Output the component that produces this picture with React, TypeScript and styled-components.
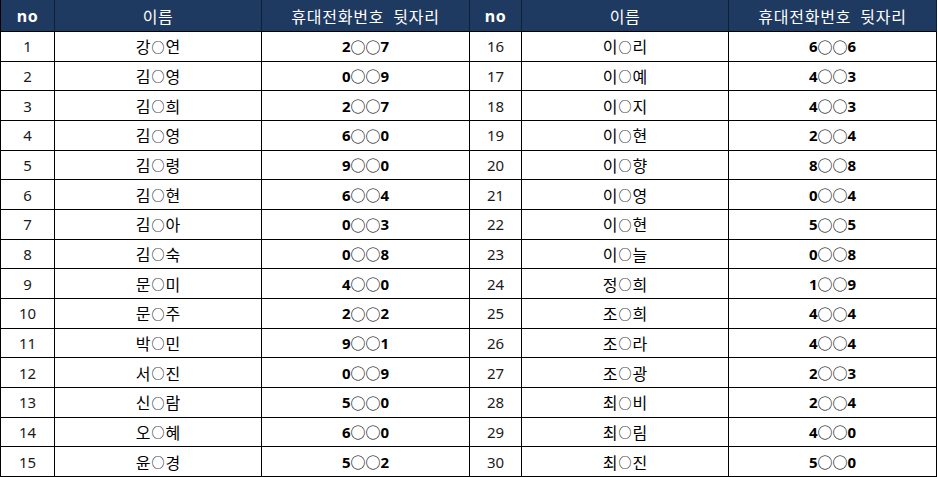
import styled, { createGlobalStyle } from "styled-components";

import type { FC } from "react";

type Entry = {
  no: number;
  name: string;
  phone: string;
};

const entries: Entry[] = [
  { no: 1, name: "강○연", phone: "2○○7" },
  { no: 2, name: "김○영", phone: "0○○9" },
  { no: 3, name: "김○희", phone: "2○○7" },
  { no: 4, name: "김○영", phone: "6○○0" },
  { no: 5, name: "김○령", phone: "9○○0" },
  { no: 6, name: "김○현", phone: "6○○4" },
  { no: 7, name: "김○아", phone: "0○○3" },
  { no: 8, name: "김○숙", phone: "0○○8" },
  { no: 9, name: "문○미", phone: "4○○0" },
  { no: 10, name: "문○주", phone: "2○○2" },
  { no: 11, name: "박○민", phone: "9○○1" },
  { no: 12, name: "서○진", phone: "0○○9" },
  { no: 13, name: "신○람", phone: "5○○0" },
  { no: 14, name: "오○혜", phone: "6○○0" },
  { no: 15, name: "윤○경", phone: "5○○2" },
  { no: 16, name: "이○리", phone: "6○○6" },
  { no: 17, name: "이○예", phone: "4○○3" },
  { no: 18, name: "이○지", phone: "4○○3" },
  { no: 19, name: "이○현", phone: "2○○4" },
  { no: 20, name: "이○향", phone: "8○○8" },
  { no: 21, name: "이○영", phone: "0○○4" },
  { no: 22, name: "이○현", phone: "5○○5" },
  { no: 23, name: "이○늘", phone: "0○○8" },
  { no: 24, name: "정○희", phone: "1○○9" },
  { no: 25, name: "조○희", phone: "4○○4" },
  { no: 26, name: "조○라", phone: "4○○4" },
  { no: 27, name: "조○광", phone: "2○○3" },
  { no: 28, name: "최○비", phone: "2○○4" },
  { no: 29, name: "최○림", phone: "4○○0" },
  { no: 30, name: "최○진", phone: "5○○0" },
];

const GlobalStyle = createGlobalStyle`
  html, body {
    margin: 0;
    padding: 0;
    background: #ffffff;
  }
  body {
    font-family: "Noto Sans", "Noto Sans CJK KR", sans-serif;
  }
`;

// masked characters are drawn as a thin circle, smaller in names than in numbers
const Masked: FC<{ text: string; small?: boolean }> = ({ text, small }) => (
  <>
    {text.split(/(○)/).map((part, i) =>
      part === "○" ? (
        <Mask key={i} small={small}>
          ○
        </Mask>
      ) : (
        <span key={i}>{part}</span>
      )
    )}
  </>
);

const App: FC = () => {
  const left = entries.slice(0, 15);
  const right = entries.slice(15);

  return (
    <>
      <GlobalStyle />
      <Sheet>
        {[0, 1].map((side) => (
          <HeaderGroup key={side}>
            <HeadCell bold>no</HeadCell>
            <HeadCell>이름</HeadCell>
            <HeadCell spaced>휴대전화번호 뒷자리</HeadCell>
          </HeaderGroup>
        ))}
        {left.map((entry, i) => (
          <Row key={entry.no}>
            <NoCell>{entry.no}</NoCell>
            <NameCell>
              <Masked text={entry.name} small />
            </NameCell>
            <PhoneCell>
              <Masked text={entry.phone} />
            </PhoneCell>
            <NoCell>{right[i].no}</NoCell>
            <NameCell>
              <Masked text={right[i].name} small />
            </NameCell>
            <PhoneCell>
              <Masked text={right[i].phone} />
            </PhoneCell>
          </Row>
        ))}
      </Sheet>
    </>
  );
};

export default App;

const Sheet = styled.div`
  display: grid;
  grid-template-columns: 54px 207px 208px 52px 207px 208px;
  grid-template-rows: 32px repeat(15, 1fr);
  width: 937px;
  height: 477px;
  box-sizing: border-box;
  border-left: 1px solid #000000;
`;

const HeaderGroup = styled.div`
  display: contents;
`;

const Row = styled.div`
  display: contents;
`;

const HeadCell = styled.div<{ bold?: boolean; spaced?: boolean }>`
  display: flex;
  align-items: center;
  justify-content: center;
  box-sizing: border-box;
  background: #1f3a61;
  color: #ffffff;
  font-size: 16px;
  font-weight: ${({ bold }) => (bold ? 700 : 400)};
  letter-spacing: ${({ spaced }) => (spaced ? "0.8px" : "0.5px")};
  word-spacing: ${({ spaced }) => (spaced ? "4px" : "0")};
  border-right: 1px solid #0e1f36;
  border-bottom: 1px solid #000000;
  white-space: nowrap;
`;

const Cell = styled.div`
  display: flex;
  align-items: center;
  justify-content: center;
  box-sizing: border-box;
  color: #000000;
  border-right: 1px solid #000000;
  border-bottom: 1px solid #000000;
  white-space: nowrap;
`;

const NoCell = styled(Cell)`
  font-size: 15px;
  color: #1a1a1a;
`;

const NameCell = styled(Cell)`
  font-size: 16px;
`;

const PhoneCell = styled(Cell)`
  font-size: 15px;
  font-weight: 700;
`;

const Mask = styled.span<{ small?: boolean }>`
  font-family: "Noto Sans CJK KR", sans-serif;
  font-weight: 400;
  font-size: ${({ small }) => (small ? "13px" : "15px")};
  margin: ${({ small }) => (small ? "0 1px" : "0")};
  color: #000000;
`;
